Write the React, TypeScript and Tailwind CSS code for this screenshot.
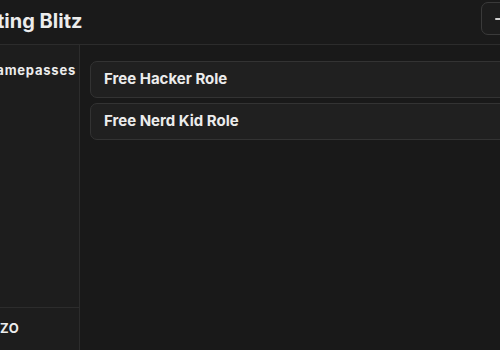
import React from "react";

export default function App() {
  const font = { fontFamily: "Inter, 'Noto Sans', sans-serif" };
  return (
    <div
      className="w-[500px] h-[350px] overflow-hidden bg-[#191919] flex flex-col text-[#ececec]"
      style={font}
    >
      <div className="h-[45px] shrink-0 flex items-start justify-between border-b border-[#2c2c2c] bg-[#1a1a1a]">
        <div className="ml-[-3px] mt-[9px] text-[20px] font-bold leading-[24px] whitespace-nowrap">
          ting Blitz
        </div>
        <div className="mt-[2px] mr-[-20px] w-[39px] h-[33px] shrink-0 rounded-[7px] border border-[#3a3a3a] bg-[#1d1d1d] flex items-center pl-[13px]">
          <div className="w-[10px] h-[2px] bg-[#d0d0d0] rounded" />
        </div>
      </div>
      <div className="flex-1 flex min-h-0">
        <div className="w-[80px] shrink-0 flex flex-col border-r border-[#2c2c2c] bg-[#1d1d1d]">
          <div className="flex-1 flex justify-end overflow-hidden pr-[3px] pt-[17px]">
            <div className="text-[13px] font-bold leading-[16px] tracking-[0.06em] whitespace-nowrap">Gamepasses</div>
          </div>
          <div className="h-[43px] shrink-0 border-t border-[#2c2c2c] flex items-center overflow-hidden">
            <div className="text-[13px] font-bold leading-[16px] mt-[-2px] tracking-[0.04em] whitespace-nowrap">ZO</div>
          </div>
        </div>
        <div className="flex-1 flex flex-col gap-[5px] pl-[10px] pt-[16px] mr-[-20px]">
          <div className="h-[37px] rounded-[7px] border border-[#333333] bg-[#202020] flex items-center pl-[13px]">
            <span className="text-[15px] font-bold">Free Hacker Role</span>
          </div>
          <div className="h-[37px] rounded-[7px] border border-[#333333] bg-[#202020] flex items-center pl-[13px]">
            <span className="text-[15px] font-bold">Free Nerd Kid Role</span>
          </div>
        </div>
      </div>
    </div>
  );
}
